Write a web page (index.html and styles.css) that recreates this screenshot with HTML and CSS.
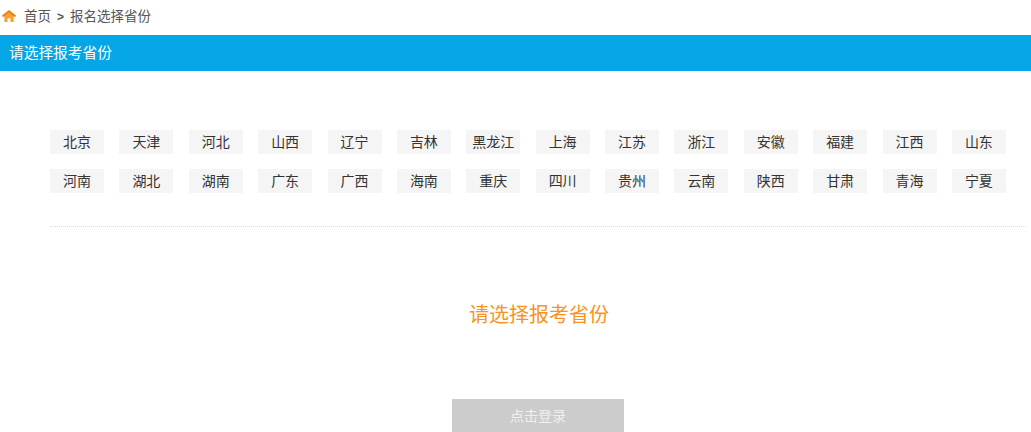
FILE: index.html
```html
<!DOCTYPE html>
<html>

<head>
    <meta charset="utf-8">
    <title>报名选择省份</title>
    <link rel="stylesheet" href="styles.css">
</head>

<body>
    <div class="crumb">
        <svg class="home" width="14" height="12" viewBox="0 0 14 12">
            <path d="M2.4 5.5 L7 1.8 L11.6 5.5 V12 H8.5 V8.2 H5.5 V12 H2.4 Z" fill="#f9a030"></path>
            <path d="M7 0 L14 5.6 L12.9 7.2 L7 2.6 L1.1 7.2 L0 5.6 Z" fill="#ee7f12"></path>
        </svg>
        <span>首页</span>
        <span class="sep">&gt;</span>
        <span>报名选择省份</span>
    </div>

    <div class="bar">请选择报考省份</div>

    <div class="provinces">
        <a class="prov">北京</a>
        <a class="prov">天津</a>
        <a class="prov">河北</a>
        <a class="prov">山西</a>
        <a class="prov">辽宁</a>
        <a class="prov">吉林</a>
        <a class="prov">黑龙江</a>
        <a class="prov">上海</a>
        <a class="prov">江苏</a>
        <a class="prov">浙江</a>
        <a class="prov">安徽</a>
        <a class="prov">福建</a>
        <a class="prov">江西</a>
        <a class="prov">山东</a>
        <a class="prov">河南</a>
        <a class="prov">湖北</a>
        <a class="prov">湖南</a>
        <a class="prov">广东</a>
        <a class="prov">广西</a>
        <a class="prov">海南</a>
        <a class="prov">重庆</a>
        <a class="prov">四川</a>
        <a class="prov">贵州</a>
        <a class="prov">云南</a>
        <a class="prov">陕西</a>
        <a class="prov">甘肃</a>
        <a class="prov">青海</a>
        <a class="prov">宁夏</a>
    </div>
    <div class="line"></div>

    <div class="tip">请选择报考省份</div>

    <div class="login-wrap">
        <div class="login">点击登录</div>
    </div>
</body>

</html>
```

FILE: styles.css
```css
html,
body {
    margin: 0;
    height: 100%;
    overflow: hidden;
    background-color: #fff;
    font-family: "Liberation Sans", "Noto Sans CJK SC", sans-serif;
}

.crumb {
    height: 35px;
    padding: 0 0 5px 2px;
    box-sizing: border-box;
    display: flex;
    align-items: center;
    font-size: 13.5px;
    color: #555;
}

.home {
    margin: 2px 8px 0 0;
}

.sep {
    margin: 3px 6px 0;
    font-weight: bold;
    font-size: 12px;
}

.bar {
    height: 36px;
    line-height: 36px;
    padding-left: 9px;
    background-color: #04a6e5;
    color: #fff;
    font-size: 14.7px;
}

.provinces {
    margin: 59px 25px 0 50px;
    display: grid;
    grid-template-columns: repeat(14, 54px);
    justify-content: space-between;
    row-gap: 15px;
}

.prov {
    height: 24px;
    line-height: 24px;
    text-align: center;
    background-color: #f5f5f5;
    color: #333;
    font-size: 14px;
}

.line {
    margin: 33px 5px 0 50px;
    border-bottom: 1px dotted #ddd;
}

.tip {
    margin-top: 73px;
    height: 30px;
    line-height: 30px;
    text-align: center;
    padding-left: 47px;
    color: #f7931e;
    font-size: 20px;
    font-weight: normal;
}

.login-wrap {
    margin-top: 69px;
    display: flex;
    justify-content: center;
    padding-left: 45px;
}

.login {
    width: 172px;
    height: 33px;
    line-height: 35px;
    text-align: center;
    background-color: #ccc;
    color: #f0f0f0;
    font-size: 14px;
}
```
